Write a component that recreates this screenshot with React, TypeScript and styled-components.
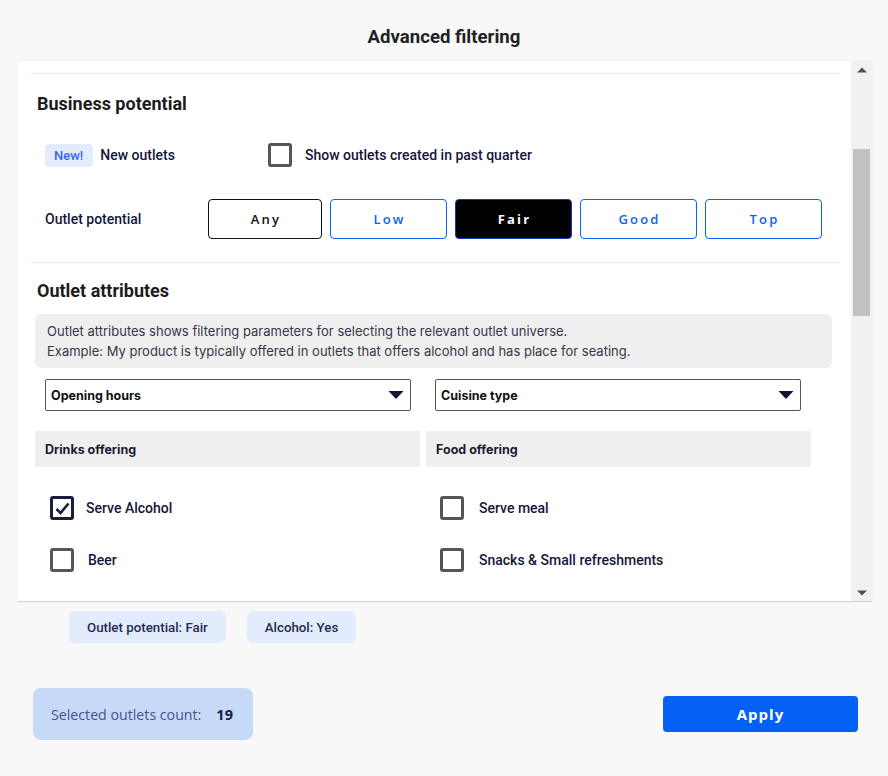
import React, { useLayoutEffect, useRef, useState } from "react";
import styled, { createGlobalStyle } from "styled-components";

const GlobalStyle = createGlobalStyle`
  html, body { margin: 0; padding: 0; }
  body {
    background: #f8f8f8;
    font-family: Roboto, "Liberation Sans", Arial, sans-serif;
    color: #16183a;
  }
  * { box-sizing: border-box; }
`;

const Page = styled.div`
  width: 888px;
  height: 776px;
  display: flex;
  flex-direction: column;
  background: #f8f8f8;
  overflow: hidden;
`;

const Title = styled.h1`
  margin: 0;
  height: 61px;
  padding-top: 12px;
  display: flex;
  align-items: center;
  justify-content: center;
  font-size: 18.6px;
  font-weight: 700;
  color: #222;
`;

const Panel = styled.div`
  margin: 0 16px 0 18px;
  height: 541px;
  flex: none;
  display: flex;
  background: #fff;
  border-bottom: 1px solid #d2d2d2;
  box-shadow: 0 0 2px rgba(0, 0, 0, 0.06);
`;

const Viewport = styled.div`
  position: relative;
  flex: 1;
  height: 100%;
  overflow-y: scroll;
  scrollbar-width: none;
  &::-webkit-scrollbar { display: none; }
`;

const Track = styled.div`
  position: relative;
  width: 21px;
  height: 100%;
  flex: none;
  background: #f1f1f1;
  display: flex;
  flex-direction: column;
  justify-content: space-between;
`;

const Arrow = styled.div`
  height: 17px;
  display: flex;
  align-items: center;
  justify-content: center;
`;

const Thumb = styled.div`
  position: absolute;
  left: 2px;
  right: 2px;
  background: #c1c1c1;
`;

const Content = styled.div`
  padding: 0 11px 40px 13px;
`;

const Divider = styled.div`
  height: 1px;
  background: #ebebeb;
`;

const Spacer = styled.div<{ $h: number }>`
  height: ${(p) => p.$h}px;
`;

const Heading = styled.h2<{ $top: number }>`
  margin: ${(p) => p.$top}px 0 0 6px;
  font-size: 18px;
  line-height: 24px;
  font-weight: 700;
  color: #1c1c1c;
`;

const Row = styled.div<{ $top: number }>`
  display: flex;
  align-items: center;
  margin-top: ${(p) => p.$top}px;
  padding-left: 14px;
`;

const RowLabel = styled.div<{ $w: number }>`
  width: ${(p) => p.$w}px;
  flex: none;
  display: flex;
  align-items: center;
  gap: 7px;
  font-size: 14px;
  font-weight: 500;
  color: #14163a;
`;

const Badge = styled.span`
  display: inline-flex;
  align-items: center;
  height: 23px;
  padding: 0 10px 0 9px;
  border-radius: 4px;
  background: #e3ecfd;
  color: #3667ee;
  font-size: 13px;
  font-weight: 500;
`;

const CheckLabel = styled.label<{ $gap?: number }>`
  display: flex;
  align-items: center;
  gap: ${(p) => p.$gap ?? 13}px;
  font-size: 14px;
  font-weight: 500;
  color: #14163a;
  cursor: pointer;
`;

const Box = styled.span<{ $checked?: boolean }>`
  width: 24px;
  height: 24px;
  flex: none;
  border: 3px solid ${(p) => (p.$checked ? "#1a1e3e" : "#555")};
  border-radius: 3px;
  display: flex;
  align-items: center;
  justify-content: center;
  background: #fff;
`;

const Segments = styled.div`
  display: flex;
  gap: 8px;
`;

const Segment = styled.button<{ $active?: boolean; $neutral?: boolean; $w: number }>`
  width: ${(p) => p.$w}px;
  height: 40px;
  border-radius: 4px;
  border: 1px solid
    ${(p) => (p.$active ? "#0b3fb0" : p.$neutral ? "#111" : "#0a63f5")};
  background: ${(p) => (p.$active ? "#000" : "#fff")};
  color: ${(p) => (p.$active ? "#fff" : p.$neutral ? "#111" : "#0a63f5")};
  font-family: "Open Sans", Lato, sans-serif;
  font-size: 13px;
  font-weight: ${(p) => (p.$active ? 700 : 600)};
  letter-spacing: 2.2px;
  padding: 0 0 0 2px;
  cursor: pointer;
`;

const Attributes = styled.div`
  margin: 11px 0 0 4px;
  width: 797px;
`;

const Info = styled.div`
  background: #efefef;
  border-radius: 6px;
  padding: 7px 12px 7px;
  font-family: Inter, Roboto, sans-serif;
  font-size: 13px;
  line-height: 20px;
  color: #3a3548;
`;

const Columns = styled.div<{ $top: number }>`
  display: grid;
  grid-template-columns: 385px 385px;
  column-gap: 6px;
  margin-top: ${(p) => p.$top}px;
`;

const Column = styled.div`
  display: flex;
  flex-direction: column;
`;

const Select = styled.div<{ $inset: number }>`
  margin: 0 ${(p) => 19 - p.$inset}px 0 ${(p) => p.$inset}px;
  height: 32px;
  border: 1px solid #555;
  border-radius: 2px;
  background: #fff;
  display: flex;
  align-items: center;
  justify-content: space-between;
  padding: 0 6px 0 5px;
  font-family: Inter, Roboto, sans-serif;
  font-size: 12.5px;
  font-weight: 700;
  color: #111;
`;

const GroupHeader = styled.div<{ $top?: number }>`
  margin-top: ${(p) => p.$top ?? 20}px;
  height: 36px;
  background: #efefef;
  display: flex;
  align-items: center;
  padding-left: 10px;
  font-family: Inter, Roboto, sans-serif;
  font-size: 12.5px;
  font-weight: 700;
  color: #1a1c30;
`;

const CheckList = styled.div<{ $inset: number; $top?: number }>`
  display: flex;
  flex-direction: column;
  gap: 28px;
  margin-top: ${(p) => p.$top ?? 29}px;
  padding-left: ${(p) => p.$inset}px;
`;

const Chips = styled.div`
  display: flex;
  gap: 21px;
  margin: 9px 0 0 69px;
`;

const Chip = styled.span`
  display: inline-flex;
  align-items: center;
  height: 32px;
  padding: 0 18px 0 18px;
  border-radius: 6px;
  background: #e3ecfd;
  font-size: 13.3px;
  font-weight: 500;
  color: #272a52;
`;

const Footer = styled.div`
  display: flex;
  align-items: center;
  justify-content: space-between;
  margin-top: 45px;
  padding: 0 30px 0 33px;
`;

const Count = styled.div`
  width: 220px;
  height: 52px;
  border-radius: 8px;
  background: #c6d9f7;
  display: flex;
  align-items: center;
  gap: 15px;
  padding-left: 18px;
  font-family: "Open Sans", Lato, sans-serif;
  font-size: 14.2px;
  color: #46548a;
`;

const CountValue = styled.span`
  font-weight: 700;
  font-size: 14.5px;
  color: #1b2142;
`;

const ApplyButton = styled.button`
  width: 195px;
  height: 36px;
  border: none;
  border-radius: 4px;
  background: #0362f5;
  color: #fff;
  font-family: "Open Sans", Lato, sans-serif;
  font-size: 15px;
  font-weight: 700;
  letter-spacing: 1px;
  cursor: pointer;
`;

const Caret = () => (
  <svg width="16" height="10" viewBox="0 0 16 10">
    <path d="M0.5 1 L15.5 1 L8 9 Z" fill="#0d1438" />
  </svg>
);

const ArrowIcon = ({ up }: { up?: boolean }) => (
  <svg width="10" height="6" viewBox="0 0 10 6">
    <path d={up ? "M0 5.5 L10 5.5 L5 0.5 Z" : "M0 0.5 L10 0.5 L5 5.5 Z"} fill="#505050" />
  </svg>
);

const Check = ({ checked, label, gap }: { checked?: boolean; label: string; gap?: number }) => (
  <CheckLabel $gap={gap}>
    <Box $checked={checked}>
      {checked && (
        <svg width="17" height="17" viewBox="0 0 17 17">
          <path d="M2.5 9 L6.5 13 L14.5 3.5" fill="none" stroke="#1a1e3e" strokeWidth="2.6" />
        </svg>
      )}
    </Box>
    {label}
  </CheckLabel>
);

const potentials = [
  { label: "Any", w: 114, neutral: true },
  { label: "Low", w: 117 },
  { label: "Fair", w: 117 },
  { label: "Good", w: 117 },
  { label: "Top", w: 117 },
];

const drinks = ["Serve Alcohol", "Beer"];
const food = ["Serve meal", "Snacks & Small refreshments"];
const drinksMore = ["Wine", "Spirits", "Cocktails", "Soft drinks", "Coffee & tea"];
const foodMore = ["Breakfast", "Lunch", "Dinner", "Desserts", "Take away"];
const venue = [
  "Outdoor seating",
  "Indoor seating",
  "Live music",
  "Sports screening",
  "Parking",
  "Wheelchair access",
  "Family friendly",
  "Pet friendly",
  "Terrace",
  "Bar counter",
];
const services = [
  "Reservations",
  "Private rooms",
  "Happy hour",
  "Delivery",
  "Wi-Fi",
  "Late night",
  "Catering",
  "Events",
  "Card payment",
  "Loyalty program",
];

const ARROW = 17;

export default function App() {
  const viewRef = useRef<HTMLDivElement>(null);
  const dividerRef = useRef<HTMLDivElement>(null);
  const [potential, setPotential] = useState("Fair");
  const [thumb, setThumb] = useState({ top: 89, height: 167 });

  const syncThumb = () => {
    const v = viewRef.current;
    if (!v) return;
    const trackLen = v.clientHeight - ARROW * 2;
    const height = Math.max(20, (trackLen * v.clientHeight) / v.scrollHeight);
    const range = v.scrollHeight - v.clientHeight;
    const top = ARROW + (range > 0 ? ((trackLen - height) * v.scrollTop) / range : 0);
    setThumb({ top, height });
  };

  useLayoutEffect(() => {
    if (viewRef.current && dividerRef.current) {
      viewRef.current.scrollTop = dividerRef.current.offsetTop - 12;
    }
    syncThumb();
  }, []);

  return (
    <>
      <GlobalStyle />
      <Page>
        <Title>Advanced filtering</Title>
        <Panel>
          <Viewport ref={viewRef} onScroll={syncThumb}>
            <Content>
              <Heading $top={18}>Location</Heading>
              <Attributes>
                <Info>
                  Location filters narrow the outlet universe to selected regions and cities.
                  <br />
                  Example: My product is distributed only in the capital region.
                </Info>
                <Columns $top={11}>
                  <Column>
                    <Select $inset={10}>
                      Region
                      <Caret />
                    </Select>
                    <GroupHeader>Urbanisation</GroupHeader>
                  </Column>
                  <Column>
                    <Select $inset={9}>
                      City
                      <Caret />
                    </Select>
                    <GroupHeader>Outlet channel</GroupHeader>
                  </Column>
                </Columns>
              </Attributes>
              <Spacer $h={38} />
              <Divider ref={dividerRef} />
              <Heading $top={18}>Business potential</Heading>
              <Row $top={27}>
                <RowLabel $w={223}>
                  <Badge>New!</Badge>
                  New outlets
                </RowLabel>
                <Check label="Show outlets created in past quarter" />
              </Row>
              <Row $top={32}>
                <RowLabel $w={163}>Outlet potential</RowLabel>
                <Segments>
                  {potentials.map((p) => (
                    <Segment
                      key={p.label}
                      $w={p.w}
                      $neutral={p.neutral}
                      $active={potential === p.label}
                      onClick={() => setPotential(p.label)}
                    >
                      {p.label}
                    </Segment>
                  ))}
                </Segments>
              </Row>
              <Spacer $h={23} />
              <Divider />
              <Heading $top={16}>Outlet attributes</Heading>
              <Attributes>
                <Info>
                  Outlet attributes shows filtering parameters for selecting the relevant outlet universe.
                  <br />
                  Example: My product is typically offered in outlets that offers alcohol and has place for seating.
                </Info>
                <Columns $top={11}>
                  <Column>
                    <Select $inset={10}>
                      Opening hours
                      <Caret />
                    </Select>
                    <GroupHeader>Drinks offering</GroupHeader>
                    <CheckList $inset={15}>
                      {drinks.map((d, i) => (
                        <Check key={d} label={d} checked={i === 0} gap={i === 1 ? 14 : 12} />
                      ))}
                    </CheckList>
                    <CheckList $inset={15} $top={40}>
                      {drinksMore.map((d) => (
                        <Check key={d} label={d} gap={12} />
                      ))}
                    </CheckList>
                  </Column>
                  <Column>
                    <Select $inset={9}>
                      Cuisine type
                      <Caret />
                    </Select>
                    <GroupHeader>Food offering</GroupHeader>
                    <CheckList $inset={14}>
                      {food.map((f) => (
                        <Check key={f} label={f} gap={15} />
                      ))}
                    </CheckList>
                    <CheckList $inset={14} $top={40}>
                      {foodMore.map((f) => (
                        <Check key={f} label={f} gap={15} />
                      ))}
                    </CheckList>
                  </Column>
                </Columns>
                <Columns $top={11}>
                  <Column>
                    <GroupHeader>Venue</GroupHeader>
                    <CheckList $inset={15}>
                      {venue.map((v) => (
                        <Check key={v} label={v} gap={12} />
                      ))}
                    </CheckList>
                  </Column>
                  <Column>
                    <GroupHeader>Services</GroupHeader>
                    <CheckList $inset={14}>
                      {services.map((v) => (
                        <Check key={v} label={v} gap={15} />
                      ))}
                    </CheckList>
                  </Column>
                </Columns>
              </Attributes>
            </Content>
          </Viewport>
          <Track>
            <Arrow>
              <ArrowIcon up />
            </Arrow>
            <Arrow>
              <ArrowIcon />
            </Arrow>
            <Thumb style={{ top: thumb.top, height: thumb.height }} />
          </Track>
        </Panel>
        <Chips>
          <Chip>{`Outlet potential: ${potential}`}</Chip>
          <Chip>Alcohol: Yes</Chip>
        </Chips>
        <Footer>
          <Count>
            <span>Selected outlets count:</span>
            <CountValue>19</CountValue>
          </Count>
          <ApplyButton>Apply</ApplyButton>
        </Footer>
      </Page>
    </>
  );
}
